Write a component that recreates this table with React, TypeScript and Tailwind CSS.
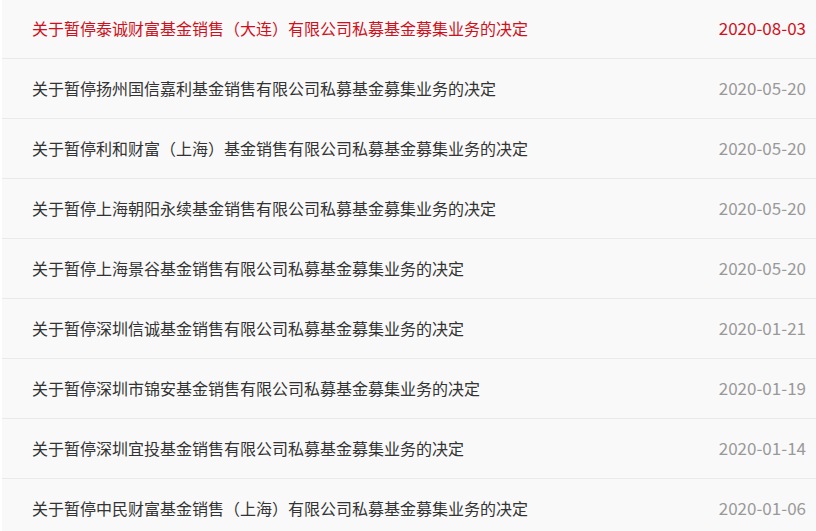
const notices = [
  { title: "关于暂停泰诚财富基金销售（大连）有限公司私募基金募集业务的决定", date: "2020-08-03", active: true },
  { title: "关于暂停扬州国信嘉利基金销售有限公司私募基金募集业务的决定", date: "2020-05-20" },
  { title: "关于暂停利和财富（上海）基金销售有限公司私募基金募集业务的决定", date: "2020-05-20" },
  { title: "关于暂停上海朝阳永续基金销售有限公司私募基金募集业务的决定", date: "2020-05-20" },
  { title: "关于暂停上海景谷基金销售有限公司私募基金募集业务的决定", date: "2020-05-20" },
  { title: "关于暂停深圳信诚基金销售有限公司私募基金募集业务的决定", date: "2020-01-21" },
  { title: "关于暂停深圳市锦安基金销售有限公司私募基金募集业务的决定", date: "2020-01-19" },
  { title: "关于暂停深圳宜投基金销售有限公司私募基金募集业务的决定", date: "2020-01-14" },
  { title: "关于暂停中民财富基金销售（上海）有限公司私募基金募集业务的决定", date: "2020-01-06" },
];

export default function App() {
  return (
    <div
      className="h-[531px] w-[816px] overflow-hidden bg-white pl-[2px]"
      style={{ fontFamily: '"Noto Sans CJK SC", "Noto Sans", sans-serif' }}
    >
      <ul className="-mt-px bg-[#f9f9f9]">
        {notices.map((n, i) => (
          <li
            key={i}
            className="flex h-[60px] items-center justify-between border-b border-[#e9e9e9] pl-[30px] pr-[10px] pb-[2px] text-[16px]"
          >
            <span className={n.active ? "text-[#d0101b]" : "text-[#333333]"}>{n.title}</span>
            <span className={`text-[17px] ${n.active ? "text-[#d0101b]" : "text-[#999999]"}`}>{n.date}</span>
          </li>
        ))}
      </ul>
    </div>
  );
}
